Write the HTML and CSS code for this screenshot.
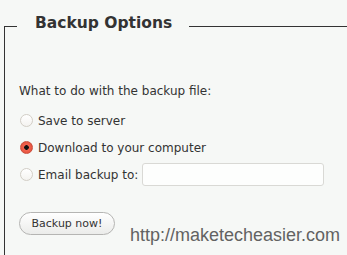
FILE: index.html
```html
<!DOCTYPE html>
<html lang="en">
<head>
    <meta charset="UTF-8">
    <title>Backup Options</title>
    <link rel="stylesheet" href="styles.css">
</head>
<body>

    <fieldset class="options">
        <legend>Backup Options</legend>

        <p class="question">What to do with the backup file:</p>

        <label class="choice">
            <span class="radio"></span>
            Save to server
        </label>
        <label class="choice">
            <span class="radio checked"></span>
            Download to your computer
        </label>
        <label class="choice">
            <span class="radio"></span>
            Email backup to:
            <input type="text" class="email">
        </label>

        <button class="backup-button">Backup now!</button>
    </fieldset>

    <div class="watermark">http://maketecheasier.com</div>

</body>
</html>
```

FILE: styles.css
```css
html, body {
    height: 100%;
    overflow: hidden;
}

body {
    margin: 0;
    padding: 0;
    background-color: #f6f8f6;
    font-family: "DejaVu Sans", Verdana, sans-serif;
    color: #333;
    position: relative;
}

.options {
    box-sizing: border-box;
    height: 241px;
    margin: 14px 0 0 4px;
    padding: 0 0 0 14px;
    border: none;
    border-top: 1px solid #333;
    border-left: 1px solid #333;
}

.options legend {
    margin-left: -2px;
    padding: 0 17px 6px 18px;
    font-size: 15.5px;
    font-weight: bold;
    line-height: 18px;
    color: #333;
}

.question {
    margin: 46px 0 10px 0;
    font-size: 12px;
    line-height: 15px;
}

.choice {
    display: flex;
    align-items: center;
    height: 23px;
    margin-bottom: 4px;
    font-size: 12px;
}

.radio {
    box-sizing: border-box;
    width: 13px;
    height: 13px;
    border: 1px solid #d2cec6;
    border-radius: 50%;
    background: linear-gradient(#ffffff, #f4f3f0);
    margin: 0 5px 0 1px;
    flex-shrink: 0;
}

.radio.checked {
    border-color: #c9503f;
    background: radial-gradient(circle, #111 0, #111 2px, #f26652 2.6px, #e8543f 70%, #d84a36 100%);
}

.email {
    box-sizing: border-box;
    width: 182px;
    height: 23px;
    margin-left: 4px;
    padding: 0;
    border: 1px solid #d9d9d5;
    border-radius: 3px;
    background: #fdfefd;
}

.backup-button {
    display: block;
    margin-top: 25.5px;
    box-sizing: border-box;
    width: 96px;
    height: 23px;
    padding: 0;
    border: 1px solid #b5b5b3;
    border-radius: 12px;
    background: linear-gradient(#ffffff, #ebecea);
    font-family: "DejaVu Sans", Verdana, sans-serif;
    font-size: 11px;
    color: #333;
}

.watermark {
    position: absolute;
    left: 130px;
    top: 225px;
    font-family: "Liberation Sans", Arial, sans-serif;
    font-size: 18px;
    color: #626262;
}
```
